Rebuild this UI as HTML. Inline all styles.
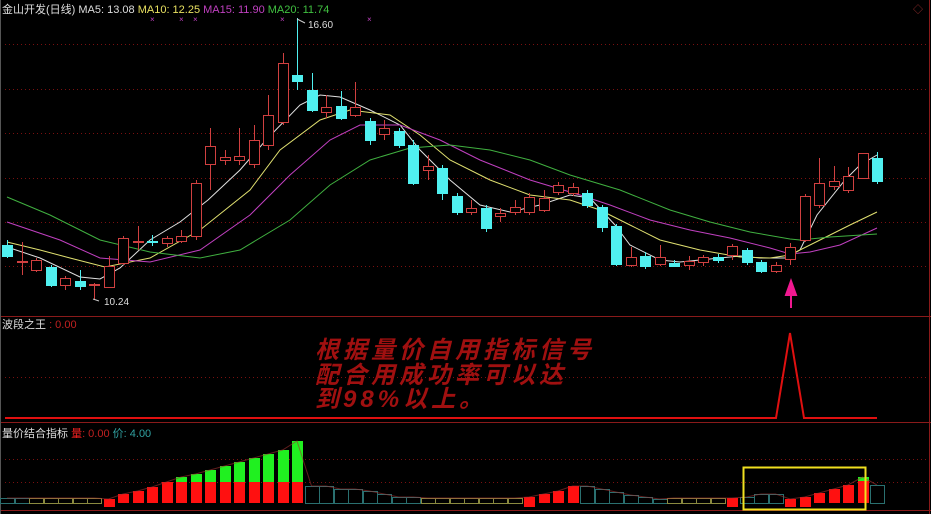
<!DOCTYPE html>
<html><head><meta charset="utf-8"><style>
html,body{margin:0;padding:0;background:#000;width:931px;height:514px;overflow:hidden}
svg{display:block}
text{font-family:"Liberation Sans","Noto Sans CJK SC",sans-serif}
</style></head><body>
<svg id="s" width="931" height="514" xmlns="http://www.w3.org/2000/svg">
<rect width="931" height="514" fill="#000"/>
<g stroke="#7a1010" stroke-dasharray="1,3" stroke-width="1">
<line x1="5" y1="44.5" x2="928" y2="44.5"/><line x1="5" y1="89.5" x2="928" y2="89.5"/>
<line x1="5" y1="133.5" x2="928" y2="133.5"/><line x1="5" y1="178.5" x2="928" y2="178.5"/>
<line x1="5" y1="222.5" x2="928" y2="222.5"/><line x1="5" y1="266.5" x2="928" y2="266.5"/>
<line x1="5" y1="377.5" x2="928" y2="377.5"/>
<line x1="5" y1="459.5" x2="928" y2="459.5"/><line x1="5" y1="482.5" x2="928" y2="482.5"/>
</g>
<line x1="0" y1="316.5" x2="931" y2="316.5" stroke="#8a1a1a"/>
<line x1="0" y1="422.5" x2="931" y2="422.5" stroke="#8a1a1a"/>
<line x1="0" y1="510.5" x2="931" y2="510.5" stroke="#8a1a1a"/>
<line x1="929.5" y1="0" x2="929.5" y2="514" stroke="#8a1a1a"/>
<line x1="0.5" y1="0" x2="0.5" y2="514" stroke="#555"/>
<g id="ma" fill="none" stroke-width="1"></g>
<g id="c"></g>
<g id="v"></g>
<text x="2" y="13" font-size="11" fill="#ddd">金山开发(日线) MA5: 13.08 <tspan fill="#e8e060">MA10: 12.25</tspan> <tspan fill="#c040c0">MA15: 11.90</tspan> <tspan fill="#40c040">MA20: 11.74</tspan></text>
<g fill="#c040c0" font-size="8"><text x="150" y="22">×</text><text x="179" y="22">×</text><text x="193" y="22">×</text><text x="280" y="22">×</text><text x="367" y="22">×</text></g>
<text x="913" y="13" font-size="10" fill="#a03030">◇</text>
<polyline points="297,19 305,23" stroke="#ccc" fill="none"/>
<text x="308" y="28" font-size="10" fill="#ddd">16.60</text>
<polyline points="93,299 99,301" stroke="#ccc" fill="none"/>
<text x="104" y="305" font-size="10" fill="#ddd">10.24</text>
<path d="M791 308 L791 290 M786 295 L791 281 L796 295 Z" stroke="#f01890" fill="#f01890" stroke-width="2"/>
<text x="2" y="328" font-size="11" fill="#ddd">波段之王 <tspan fill="#c02020">: 0.00</tspan></text>
<polyline points="5,418 776,418 790,333 804,418 877,418" stroke="#e01010" stroke-width="2" fill="none"/>
<g font-size="24" font-style="italic" font-weight="bold" fill="#a01010" letter-spacing="4" font-family="Liberation Serif,Noto Serif CJK SC,serif">
<text x="315" y="358">根据量价自用指标信号</text>
<text x="315" y="383">配合用成功率可以达</text>
<text x="315" y="407">到98%以上。</text></g>
<text x="2" y="437" font-size="11" fill="#ddd">量价结合指标 <tspan fill="#f02020">量</tspan><tspan fill="#c02020">: 0.00</tspan> <tspan fill="#30a0a0">价: 4.00</tspan></text>
<rect x="743.5" y="467.5" width="122" height="42" fill="none" stroke="#f0e020" stroke-width="2"/>
</svg>
<script>
var NS="http://www.w3.org/2000/svg";
function el(p,t,a){var e=document.createElementNS(NS,t);for(var k in a)e.setAttribute(k,a[k]);p.appendChild(e);return e;}
var X=function(i){return 7+i*14.5;};
// [color, top, bottom, wickTop, wickBot]
var C=[['c',245,256,240,258],['r',261,262,242,275],['r',260,270,258,272],['c',267,285,265,287],['r',278,285,276,290],['c',281,286,270,290],['r',284,285,283,300],['r',266,287,256,288],['r',238,263,236,265],['r',241,242,226,250],['c',241,242,235,246],['r',238,243,236,247],['r',236,241,230,243],['r',183,236,180,240],['r',146,164,128,190],['r',157,160,150,165],['r',156,160,128,165],['r',140,164,125,168],['r',115,145,95,150],['r',63,122,53,125],['c',75,81,18,90],['c',90,110,73,112],['r',107,112,95,118],['c',106,118,91,120],['r',107,115,82,117],['c',121,140,118,145],['r',128,134,120,140],['c',131,145,128,148],['c',145,183,140,185],['r',166,170,155,180],['c',168,193,165,200],['c',196,212,193,215],['r',208,212,200,215],['c',208,228,205,232],['r',213,216,208,222],['r',207,212,200,215],['r',197,212,193,215],['r',198,210,190,212],['r',185,192,182,195],['r',187,193,183,196],['c',193,205,190,208],['c',207,227,205,232],['c',226,264,224,266],['r',257,265,247,267],['c',256,266,252,269],['r',257,264,245,266],['c',263,266,260,267],['r',261,265,256,270],['r',257,262,255,266],['c',257,260,254,263],['r',246,255,244,260],['c',250,262,248,265],['c',262,271,260,273],['r',265,271,262,273],['r',247,259,243,265],['r',196,240,194,242],['r',183,205,158,208],['r',181,186,166,190],['r',176,190,167,193],['r',153,178,153,178],['c',158,181,152,184]];
var g=document.getElementById('c');
C.forEach(function(c,i){var x=Math.round(X(i))+0.5;var col=c[0]=='r'?'#d04040':'#50f0f0';
el(g,'line',{x1:x,y1:c[3],x2:x,y2:c[4],stroke:col});
var h=Math.max(1,c[2]-c[1]);
if(c[0]=='r')el(g,'rect',{x:x-5,y:c[1]+0.5,width:10,height:h,fill:'#000',stroke:col});
else el(g,'rect',{x:x-5.5,y:c[1],width:11,height:h+1,fill:col});});
var M={
'#e0e0e0':[[7,247],[40,258],[80,277],[100,279],[120,268],[150,240],[180,222],[208,200],[240,170],[266,140],[300,105],[320,95],[340,97],[370,110],[400,125],[420,150],[450,180],[480,205],[510,212],[540,205],[570,195],[590,198],[615,225],[630,245],[660,260],[680,262],[720,258],[740,256],[760,258],[785,258],[800,250],[817,215],[845,180],[860,165],[877,155]],
'#e0e070':[[7,242],[40,250],[70,258],[105,267],[150,258],[200,230],[250,190],[280,150],[320,120],[350,110],[390,115],[420,135],[450,160],[490,180],[530,195],[570,200],[600,210],[630,225],[660,240],[700,250],[740,257],[770,258],[790,255],[820,240],[850,225],[877,212]],
'#c040c0':[[7,222],[60,240],[100,258],[150,262],[200,250],[250,215],[290,175],[330,140],[360,125],[400,125],[440,140],[480,160],[530,180],[580,195],[610,205],[650,220],[690,230],[730,238],[770,248],[790,254],[810,252],[840,245],[877,228]],
'#40b040':[[7,197],[50,215],[100,240],[150,252],[200,258],[240,250],[290,220],[330,185],[370,160],[410,148],[450,145],[490,150],[530,160],[570,175],[620,190],[670,210],[710,222],[750,232],[790,239],[800,240],[830,237],[877,234]]};
var mg=document.getElementById('ma');
for(var k in M){el(mg,'polyline',{points:M[k].map(function(p){return p.join(',')}).join(' '),stroke:k});}
// volume: [type, top] type r=red, g=green-over-red, t=teal box, o=olive
var V=[['t',498],['t',498],['o',498],['o',498],['o',498],['o',498],['o',498],['r',499],['r',494],['r',491],['r',487],['r',482],['g',477],['g',474],['g',470],['g',466],['g',462],['g',458],['g',454],['g',450],['g',441],['t',486],['t',486],['t',489],['t',489],['t',491],['t',494],['t',497],['t',497],['o',498],['o',498],['o',498],['o',498],['o',498],['o',498],['o',498],['r',497],['r',494],['r',491],['r',486],['t',486],['t',489],['t',492],['t',495],['t',497],['t',499],['o',498],['o',498],['o',498],['o',498],['r',498],['t',497],['t',494],['t',494],['r',499],['r',497],['r',493],['r',489],['r',485],['g',477],['t',485]];
var vg=document.getElementById('v');var B=503;
V.forEach(function(v,i){var x=Math.round(X(i));var t=v[0],y=v[1];
if(t=='r'){var bot=(y>=497)?507:B;el(vg,'rect',{x:x-5,y:y,width:11,height:bot-y,fill:'#ff1010'});}
else if(t=='g'){var ry=(i>55)?481:482;el(vg,'rect',{x:x-5,y:ry,width:11,height:B-ry,fill:'#ff1010'});el(vg,'rect',{x:x-5,y:y,width:11,height:ry-y,fill:'#20f020'});}
else{el(vg,'rect',{x:x-6.5,y:y+0.5,width:14,height:B-y,fill:'none',stroke:t=='t'?'#2a7070':'#8a8a40'});}
});
var pts=V.map(function(v,i){return X(i)+','+v[1];}).join(' ');
el(vg,'polyline',{points:pts,fill:'none',stroke:'#a03030','stroke-width':1,opacity:0.6});
</script>
</body></html>
